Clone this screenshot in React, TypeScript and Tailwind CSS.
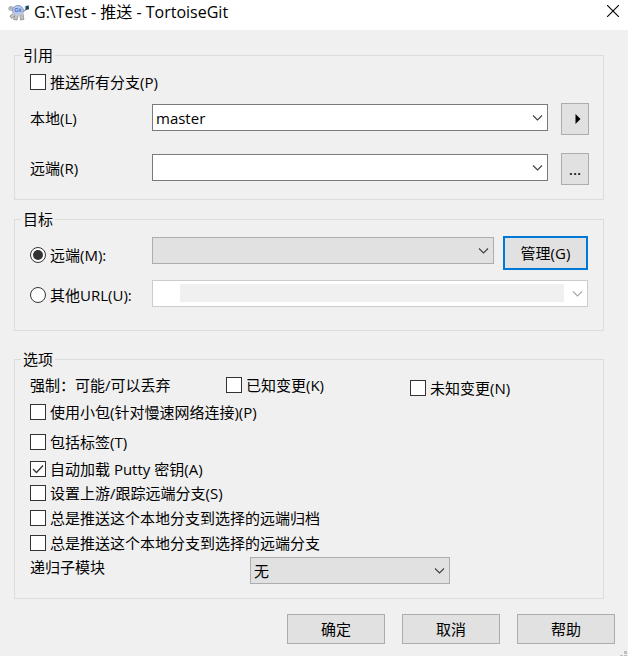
import React, { useState } from 'react';

const Chevron = ({ className = '' }: { className?: string }) => (
  <svg className={`pointer-events-none absolute top-1/2 -translate-y-1/2 w-[11px] h-[7px] ${className}`} viewBox="0 0 11 7" fill="none" stroke="currentColor">
    <path d="M1 1l4.5 4.5L10 1" strokeWidth="1.1" />
  </svg>
);

const TurtleLogo = () => (
  <svg className="w-[22px] h-5 shrink-0" viewBox="0 0 22 20" aria-hidden="true">
    {/* legs */}
    <path d="M5.500 11l-3.500 3 1.500 2.500L7 14zM7 13l-1.500 4.500 3.500.5 1-4zM12 13.500l.5 4.500 3.400-.6L15 12z" fill="#c4c5c7" stroke="#7d7f85" strokeWidth=".7" />
    <path d="M14.500 9.500l3-1.500 1-2.500" fill="none" stroke="#9a9ca2" strokeWidth="1.500" />
    {/* head */}
    <ellipse cx="3.200" cy="6.500" rx="2.600" ry="2" fill="#cdced1" stroke="#85878d" strokeWidth=".6" />
    <circle cx="2.800" cy="6" r=".6" fill="#555961" />
    {/* shell */}
    <ellipse cx="10" cy="8.500" rx="5.400" ry="5" fill="#b4caf2" stroke="#7488b0" strokeWidth=".8" />
    <path d="M4.500 10.800c2 3.200 8.500 3.400 11 0" fill="none" stroke="#c9cacd" strokeWidth="1.500" />
    <text x="10" y="10" textAnchor="middle" fontSize="5" fontWeight="700" fontFamily="Liberation Sans, sans-serif" fill="#4468b8">Git</text>
    {/* flag */}
    <path d="M17 4.500l3.700-1.200.3 4-3 .7z" fill="#17445f" />
    <circle cx="17.300" cy="5.500" r=".8" fill="#7ec3df" />
  </svg>
);

interface CheckBoxProps {
  label: string;
  defaultChecked?: boolean;
  className?: string;
}

const CheckBox: React.FC<CheckBoxProps> = ({ label, defaultChecked, className = '' }) => (
  <label className={`flex items-center gap-1 h-5 whitespace-nowrap ${className}`}>
    <span className="relative w-4 h-4 shrink-0">
      <input type="checkbox" defaultChecked={defaultChecked} className="peer block appearance-none w-4 h-4 bg-white border border-[#333333]" />
      <svg className="pointer-events-none absolute inset-0 w-4 h-4 text-[#333333] opacity-0 peer-checked:opacity-100" viewBox="0 0 16 16" fill="none" stroke="currentColor">
        <path d="M3 8l3.500 3.500L13 4.500" strokeWidth="1.300" />
      </svg>
    </span>
    {label}
  </label>
);

interface RadioProps {
  label: string;
  checked: boolean;
  onChange: () => void;
}

const Radio: React.FC<RadioProps> = ({ label, checked, onChange }) => (
  <label className="flex items-center gap-1 w-[122px] shrink-0 self-stretch whitespace-nowrap">
    <span className="relative w-4 h-4 shrink-0">
      <input type="radio" name="destination" checked={checked} onChange={onChange} className="peer block appearance-none w-4 h-4 rounded-full bg-white border border-[#333333]" />
      <span className="pointer-events-none absolute inset-[3px] rounded-full bg-[#333333] opacity-0 peer-checked:opacity-100"></span>
    </span>
    {label}
  </label>
);

interface SelectBoxProps {
  id?: string;
  label?: string;
  options: string[];
  className: string;
  disabled?: boolean;
  children?: React.ReactNode;
}

const SelectBox: React.FC<SelectBoxProps> = ({ id, label, options, className, disabled, children }) => (
  <div className="relative flex-1 min-w-0">
    <select id={id} aria-label={label} disabled={disabled} className={`block appearance-none w-full h-[27px] border pl-[3px] pr-6 ${className}`}>
      {options.map(option => (
        <option key={option}>{option}</option>
      ))}
    </select>
    {children}
    <Chevron className={disabled ? 'right-[5px] text-[#a8a8a8]' : 'right-[5px] text-[#404040]'} />
  </div>
);

const Group = ({ title, className, children }: { title: string; className: string; children: React.ReactNode }) => (
  <fieldset className={`min-w-0 border border-[#dcdcdc] pl-[15px] ${className}`}>
    <legend className="-ml-[9px] h-5 px-[2px]">{title}</legend>
    {children}
  </fieldset>
);

const App: React.FC = () => {
  const [destination, setDestination] = useState<'remote' | 'url'>('remote');

  return (
    <div className="min-h-screen flex flex-col bg-[#f0f0f0] text-black text-[15px] leading-5 font-['Open_Sans','Noto_Sans_CJK_SC',sans-serif]">
      {/* Title bar */}
      <header className="flex items-start justify-between h-[30px] bg-white pl-2 pr-[9px]">
        <div className="flex items-center gap-1 h-6">
          <TurtleLogo />
          <h1 className="text-[16px] leading-5">G:\Test - 推送 - TortoiseGit</h1>
        </div>
        <button aria-label="关闭" className="flex items-center h-[22px]">
          <svg className="w-3 h-3" viewBox="0 0 12 12" fill="none" stroke="currentColor">
            <path d="M0 0l12 12M12 0L0 12" strokeWidth="1.100" />
          </svg>
        </button>
      </header>

      <main className="pt-[15px] pl-[14px] pr-6">
        <Group title="引用" className="pt-[7px] pr-[14px] pb-[14px]">
          <CheckBox label="推送所有分支(P)" className="mb-[11px]" />
          <div className="flex items-start gap-[13px]">
            <div className="flex items-center flex-1 min-w-0 h-[29px]">
              <label htmlFor="local" className="w-[122px] shrink-0">本地(L)</label>
              <SelectBox id="local" options={['master']} className="bg-white border-[#7a7a7a]" />
            </div>
            <button aria-label="浏览本地引用" className="flex items-center justify-center w-7 h-8 bg-[#e1e1e1] border border-[#adadad]">
              <svg className="w-[18px] h-[10px]" viewBox="0 0 18 10" fill="currentColor">
                <path d="M9.500 0l5 5-5 5z" />
              </svg>
            </button>
          </div>
          <div className="flex items-start gap-[13px] mt-[18px]">
            <div className="flex items-center flex-1 min-w-0 h-[29px]">
              <label htmlFor="remote" className="w-[122px] shrink-0">远端(R)</label>
              <SelectBox id="remote" options={['']} className="bg-white border-[#7a7a7a]" />
            </div>
            <button className="w-7 h-8 text-[16px] bg-[#e1e1e1] border border-[#adadad]">...</button>
          </div>
        </Group>

        <Group title="目标" className="mt-[9px] pt-[7px] pr-[15px] pb-[19px]">
          <div className="flex items-start h-[38px]">
            <Radio label="远端(M):" checked={destination === 'remote'} onChange={() => setDestination('remote')} />
            <div className="flex items-center flex-1 min-w-0 h-[29px]">
              <SelectBox label="远端" options={['']} className="bg-[#e1e1e1] border-[#adadad]" />
            </div>
            <button className="w-[85px] h-[34px] ml-[9px] bg-[#e1e1e1] border-2 border-[#0078d7]">管理(G)</button>
          </div>
          <div className="flex items-start h-8 mt-[5px]">
            <Radio label="其他URL(U):" checked={destination === 'url'} onChange={() => setDestination('url')} />
            <div className="flex items-center flex-1 min-w-0 h-[29px]">
              <SelectBox label="其他URL" options={['']} disabled={destination !== 'url'} className="bg-white border-[#cccccc]">
                <span className="pointer-events-none absolute left-7 right-6 top-1 h-[18px] bg-[#f0f0f0]"></span>
              </SelectBox>
            </div>
          </div>
        </Group>

        <Group title="选项" className="mt-[18px] pt-[6px] pr-[15px] pb-[14px]">
          <div className="flex h-[23px]">
            <span className="w-[196px]">强制：可能/可以丢弃</span>
            <CheckBox label="已知变更(K)" className="w-[184px]" />
            <CheckBox label="未知变更(N)" className="self-end" />
          </div>
          <CheckBox label="使用小包(针对慢速网络连接)(P)" className="mt-1" />
          <CheckBox label="包括标签(T)" className="mt-[10px]" />
          <CheckBox label="自动加载 Putty 密钥(A)" defaultChecked className="mt-[7px]" />
          <CheckBox label="设置上游/跟踪远端分支(S)" className="mt-1" />
          <CheckBox label="总是推送这个本地分支到选择的远端归档" className="mt-[5px]" />
          <CheckBox label="总是推送这个本地分支到选择的远端分支" className="mt-[5px]" />
          <div className="flex items-start mt-1">
            <label htmlFor="submodules" className="w-[220px] shrink-0">递归子模块</label>
            <div className="flex w-[200px]">
              <SelectBox id="submodules" options={['无', '检查', '根据需要']} className="bg-[#e1e1e1] border-[#adadad]" />
            </div>
          </div>
        </Group>
      </main>

      {/* Dialog buttons */}
      <footer className="relative flex justify-end gap-[17px] pt-[15px] pr-[13px] pb-3">
        {['确定', '取消', '帮助'].map(name => (
          <button key={name} className="w-[98px] h-[30px] bg-[#e1e1e1] border border-[#adadad]">{name}</button>
        ))}
        <svg className="absolute right-0 bottom-0 w-2 h-[5px]" viewBox="0 0 8 5" fill="#bfbfbf" aria-hidden="true">
          <path d="M4 0h3v3H4zM0 4h3v1H0zM4 4h3v1H4z" />
        </svg>
      </footer>
    </div>
  );
};

export default App;
